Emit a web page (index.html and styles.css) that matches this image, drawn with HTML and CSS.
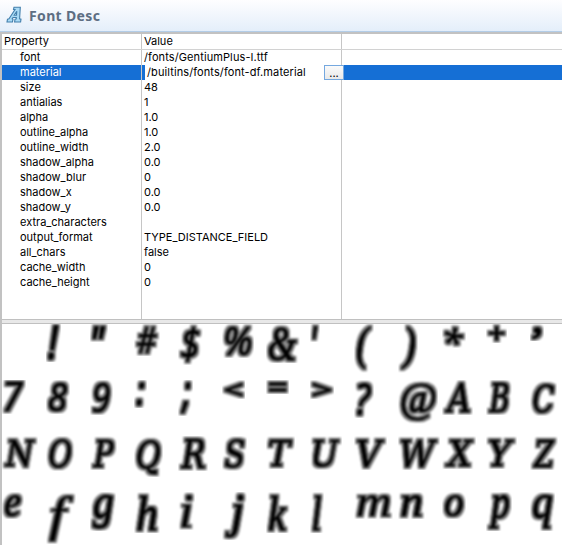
FILE: index.html
```html
<!DOCTYPE html>
<html lang="en">
<head>
<meta charset="utf-8">
<title>Font Desc</title>
<link rel="stylesheet" href="styles.css">
</head>
<body>
<header class="head">
<svg class="logo" width="17" height="18" viewBox="0 0 17 18"><path d="M1.5 13.2 3 12.8 9 3.5H7.5L8 1.2H14.3L13.6 12.8 15 13.2 14.6 16H8.6L9 13.3 10.3 12.8V11.5H7L6.2 12.8 7 13.2 6.4 16H1ZM8.2 9.2H10.5L10.8 5.2Z" fill="#a9daf5" stroke="#437fac" stroke-width="1.1" fill-rule="evenodd"/></svg>
<h1 class="title">Font Desc</h1>
</header>
<main class="editor">
<section class="table">
<div class="row columns"><span class="name">Property</span><span class="value">Value</span><span class="rest"></span></div>
<div class="row"><span class="name">font</span><span class="value path">/fonts/GentiumPlus-I.ttf</span><span class="rest"></span></div>
<div class="row selected"><span class="name">material</span><span class="value path"><span class="field">/builtins/fonts/font-df.material</span><button class="browse">...</button></span><span class="rest"></span></div>
<div class="row"><span class="name">size</span><span class="value">48</span><span class="rest"></span></div>
<div class="row"><span class="name">antialias</span><span class="value">1</span><span class="rest"></span></div>
<div class="row"><span class="name">alpha</span><span class="value">1.0</span><span class="rest"></span></div>
<div class="row"><span class="name">outline_alpha</span><span class="value">1.0</span><span class="rest"></span></div>
<div class="row"><span class="name">outline_width</span><span class="value">2.0</span><span class="rest"></span></div>
<div class="row"><span class="name">shadow_alpha</span><span class="value">0.0</span><span class="rest"></span></div>
<div class="row"><span class="name">shadow_blur</span><span class="value">0</span><span class="rest"></span></div>
<div class="row"><span class="name">shadow_x</span><span class="value">0.0</span><span class="rest"></span></div>
<div class="row"><span class="name">shadow_y</span><span class="value">0.0</span><span class="rest"></span></div>
<div class="row"><span class="name">extra_characters</span><span class="value"></span><span class="rest"></span></div>
<div class="row"><span class="name">output_format</span><span class="value">TYPE_DISTANCE_FIELD</span><span class="rest"></span></div>
<div class="row"><span class="name">all_chars</span><span class="value">false</span><span class="rest"></span></div>
<div class="row"><span class="name">cache_width</span><span class="value">0</span><span class="rest"></span></div>
<div class="row"><span class="name">cache_height</span><span class="value">0</span><span class="rest"></span></div>
<div class="row filler"><span class="name"></span><span class="value"></span><span class="rest"></span></div>
</section>
<div class="sash"></div>
<section class="glyphs" id="glyphs"></section>
</main>
<script src="glyphs.js"></script>
</body>
</html>
```
FILE: styles.css
```css
* { box-sizing: border-box; }
body { margin: 0; width: 562px; height: 545px; overflow: hidden; background: #fff; color: #000; font: 11px/15px Inter, "Liberation Sans", sans-serif; }
.head { height: 32px; display: flex; align-items: center; padding-left: 6px; gap: 6px; background: linear-gradient(#fefeff, #e4eefa); border-bottom: 1px solid #b3cde8; }
.logo { flex: none; margin-top: -2px; }
.title { margin: 0; font: bold 14px/20px "Noto Sans", "Open Sans", sans-serif; letter-spacing: 0.35px; color: #5d6e83; }
.editor { height: 513px; border-left: 2px solid #c2c2c2; border-top: 2px solid #c2c2c2; display: flex; flex-direction: column; }
.table { height: 285px; flex: none; display: flex; flex-direction: column; }
.row { display: flex; height: 15px; flex: none; white-space: nowrap; }
.name { width: 139px; padding-left: 18px; }
.value { width: 200px; padding-left: 2px; border-left: 1px solid #c6c6c6; }
.path { letter-spacing: 0.1px; }
.rest { flex: 1; border-left: 1px solid #c6c6c6; }
.columns { height: 16px; border-bottom: 1px solid #d2d2d2; }
.columns .name { padding-left: 2px; }
.filler { flex: 1; }
.selected { background: #156fd5; }
.selected .name { color: #fff; }
.selected .value { display: flex; padding: 0 0 0 3px; }
.selected .rest { border-color: #156fd5; }
.field { flex: 1; background: #fff; padding-left: 2px; }
.browse { width: 20px; height: 15px; margin-right: -3px; padding: 0; border: 1px solid #75a8df; background: linear-gradient(#fafafa, #e9e9e9); font: 11px/12px Inter, sans-serif; position: relative; }
.sash { height: 5px; flex: none; background: #e8e8e8; border-top: 1px solid #c0c0c0; border-bottom: 1px solid #c0c0c0; }
.glyphs { height: 221px; flex: none; display: grid; grid-template-columns: repeat(13, 44px); grid-auto-rows: 56px; }
.glyph { display: block; overflow: visible; }
.glyph text { fill: #000; stroke: #000; stroke-linejoin: round; }
```
FILE: glyphs.js
```js
const rows = [
  [["!",15,38],["\"",18,18],["#",26,32],["$",25,41],["%",32,34],["&",34,39],["'",10,18],["(",20,49],[")",20,49],["*",24,24],["+",21,19],["’",14,17]],
  [["7",24,34],["8",24,34],["9",23,35],[":",13,28],[";",15,36],["<",23,19],["=",23,14],[">",24,19],["?",20,38],["@",40,44],["A",31,35],["B",26,35],["C",27,36]],
  [["N",36,34],["O",29,35],["P",27,34],["Q",29,41],["R",30,35],["S",25,35],["T",29,33],["U",32,34],["V",33,34],["W",42,34],["X",34,33],["Y",31,33],["Z",28,34]],
  [["e",22,27],["f",30,52],["g",26,39],["h",26,41],["i",17,38],["j",25,48],["k",24,41],["l",14,41],["m",39,27],["n",27,27],["o",24,27],["p",26,39],["q",25,39]]
];
const ns = "http://www.w3.org/2000/svg";
const context = document.createElement("canvas").getContext("2d");
const grid = document.getElementById("glyphs");
const inset = 3.1;

function fontFor(char) {
  if (/[A-Z]/.test(char)) return 'italic 48px "DejaVu Serif"';
  if (/[a-z&@()’]/.test(char)) return 'italic 48px "Liberation Serif"';
  return 'italic 48px "Open Sans"';
}

function strokeFor(char) {
  if (/[fmi]/.test(char)) return 0.1;
  if (/[<=>+:;'"!’]/.test(char)) return 1.6;
  return 0.8;
}

function drawGlyph(char, width, height, column, row) {
  const font = fontFor(char);
  context.font = font;
  const m = context.measureText(char);
  const sx = (width - inset * 2) / (m.actualBoundingBoxLeft + m.actualBoundingBoxRight);
  const sy = (height - inset * 2) / (m.actualBoundingBoxAscent + m.actualBoundingBoxDescent);
  const x = inset + m.actualBoundingBoxLeft * sx;
  const y = inset + m.actualBoundingBoxAscent * sy;
  const id = `field-${row}-${column}`;
  const svg = document.createElementNS(ns, "svg");
  svg.setAttribute("class", "glyph");
  svg.setAttribute("width", width);
  svg.setAttribute("height", height);
  svg.style.gridArea = `${row + 1} / ${column + 1}`;
  // Wide halo under a soft core, limited to the glyph's cell in the atlas.
  svg.innerHTML = `<filter id="${id}" filterUnits="userSpaceOnUse" x="0" y="0" width="${width}" height="${height}" color-interpolation-filters="sRGB">
    <feMorphology in="SourceAlpha" operator="dilate" radius="2"/>
    <feGaussianBlur stdDeviation="1.1" result="wide"/>
    <feComponentTransfer in="wide" result="halo"><feFuncA type="linear" slope="0.52"/></feComponentTransfer>
    <feGaussianBlur in="SourceAlpha" stdDeviation="0.8" result="core"/>
    <feMerge><feMergeNode in="halo"/><feMergeNode in="core"/></feMerge>
  </filter><g filter="url(#${id})"><text></text></g>`;
  const text = svg.querySelector("text");
  text.style.font = font;
  text.setAttribute("stroke-width", strokeFor(char));
  text.setAttribute("transform", `translate(${x} ${y}) scale(${sx} ${sy})`);
  text.textContent = char;
  grid.append(svg);
}

rows.forEach((items, row) => {
  const first = 13 - items.length;
  items.forEach(([char, width, height], index) => drawGlyph(char, width, height, first + index, row));
});
```
